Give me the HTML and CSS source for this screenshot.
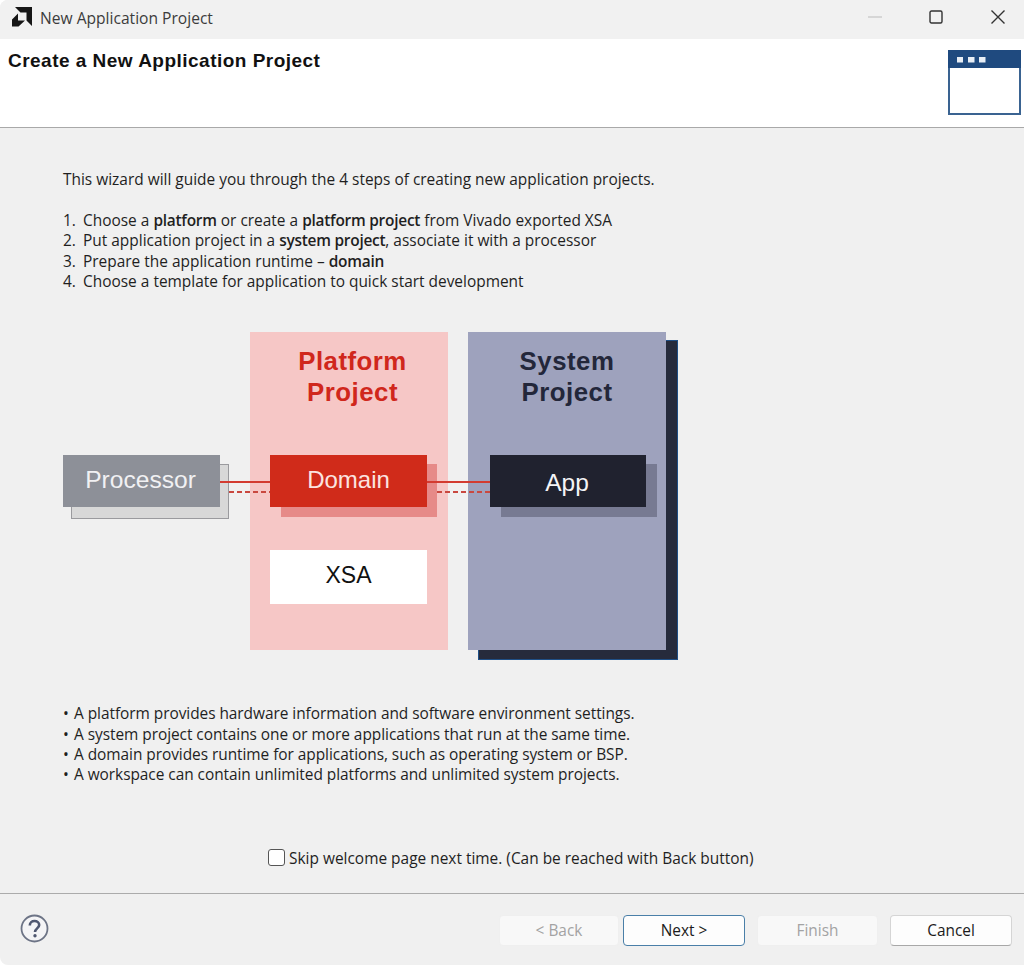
FILE: index.html
```html
<!DOCTYPE html>
<html lang="en">
<head>
<meta charset="utf-8">
<title>New Application Project</title>
<link rel="stylesheet" href="styles.css">
</head>
<body>
<div class="window">
  <header class="titlebar">
    <svg class="app-logo" width="20" height="20" viewBox="0 0 20 20"><path fill="#161616" d="M3 0H20V19L14.5 13.5V5.5H8.5Z"/><path fill="#161616" d="M0 12.5L6 6.5V13.5H13L6.5 19.5H0Z"/></svg>
    <span class="title-text">New Application Project</span>
    <div class="win-controls">
      <svg width="14" height="14" viewBox="0 0 14 14" class="win-min"><path d="M0 7H14" stroke="#c8c8c8" stroke-width="1.3"/></svg>
      <svg width="14" height="14" viewBox="0 0 14 14" class="win-max"><rect x="1" y="1" width="12" height="12" rx="1.5" fill="none" stroke="#333" stroke-width="1.4"/></svg>
      <svg width="14" height="14" viewBox="0 0 14 14" class="win-close"><path d="M0.5 0.5L13.5 13.5M13.5 0.5L0.5 13.5" stroke="#333" stroke-width="1.4"/></svg>
    </div>
  </header>

  <section class="banner">
    <h1 class="banner-title">Create a New Application Project</h1>
    <svg class="banner-icon" width="73" height="65" viewBox="0 0 73 65">
      <rect x="1" y="1" width="71" height="63" fill="#fff" stroke="#3a6391" stroke-width="2"/>
      <rect x="0" y="0" width="73" height="18" fill="#1f4a7f"/>
      <rect x="9" y="7" width="6" height="5.5" fill="#e8eef5"/>
      <rect x="20" y="7" width="6.5" height="5.5" fill="#e8eef5"/>
      <rect x="31" y="7" width="6.5" height="5.5" fill="#e8eef5"/>
    </svg>
  </section>

  <main class="content">
    <p class="intro">This wizard will guide you through the 4 steps of creating new application projects.</p>
    <ol class="steps">
      <li>Choose a <b>platform</b> or create a <b>platform project</b> from Vivado exported XSA</li>
      <li>Put application project in a <b>system project</b>, associate it with a processor</li>
      <li>Prepare the application runtime – <b>domain</b></li>
      <li>Choose a template for application to quick start development</li>
    </ol>

    <div class="diagram">
      <div class="panel panel-platform"><span>Platform<br>Project</span></div>
      <div class="sys-shadow"></div>
      <div class="panel panel-system"><span>System<br>Project</span></div>

      <div class="shadow proc-shadow"></div>
      <div class="shadow dom-shadow"></div>
      <div class="shadow app-shadow"></div>

      <div class="wire wire-a"></div>
      <div class="wire wire-b"></div>
      <div class="dash dash-a"></div>
      <div class="dash dash-b"></div>

      <div class="box box-proc">Processor</div>
      <div class="box box-dom">Domain</div>
      <div class="box box-app">App</div>
      <div class="box box-xsa">XSA</div>
    </div>

    <ul class="notes">
      <li>A platform provides hardware information and software environment settings.</li>
      <li>A system project contains one or more applications that run at the same time.</li>
      <li>A domain provides runtime for applications, such as operating system or BSP.</li>
      <li>A workspace can contain unlimited platforms and unlimited system projects.</li>
    </ul>

    <label class="skip"><span class="check"></span>Skip welcome page next time. (Can be reached with Back button)</label>
  </main>

  <footer class="footer">
    <svg class="help" width="29" height="29" viewBox="0 0 29 29">
      <circle cx="14.5" cy="14.5" r="13" fill="#f4f4f6" stroke="#6d7486" stroke-width="1.8"/>
      <path d="M9.8 11.5C9.8 8.6 12 7 14.5 7C17.2 7 19.2 8.7 19.2 11C19.2 14.2 15 14.6 15 18" fill="none" stroke="#4f5770" stroke-width="2.6"/>
      <circle cx="15" cy="21.8" r="1.7" fill="#4f5770"/>
    </svg>
    <div class="buttons">
      <button class="btn btn-back" disabled>&lt; Back</button>
      <button class="btn btn-default">Next &gt;</button>
      <button class="btn btn-finish" disabled>Finish</button>
      <button class="btn btn-cancel">Cancel</button>
    </div>
  </footer>
</div>
</body>
</html>
```
FILE: styles.css
```css
* { box-sizing: border-box; }
html, body { margin: 0; padding: 0; }
body {
  width: 1024px;
  height: 965px;
  overflow: hidden;
  background: #fff;
  font-family: "Open Sans", "Noto Sans", sans-serif;
  color: #1f1f1f;
}
.window { display: flex; flex-direction: column; height: 965px; background: #f0f0f0; border-radius: 8px 0 0 8px; overflow: hidden; }

.titlebar {
  height: 39px;
  display: flex;
  align-items: center;
  padding-left: 12px;
  background: #f1f1f1;
  flex: none;
}
.app-logo { flex: none; margin-right: 8px; margin-top: -5px; }
.title-text { font-size: 15.6px; color: #3c3c3c; margin-top: -4px; }
.win-controls { margin-left: auto; display: flex; align-items: center; gap: 48px; padding-right: 19px; margin-top: -6px; }
.win-max { margin-left: -1px; }

.banner {
  height: 89px;
  flex: none;
  background: #fff;
  border-bottom: 1px solid #a9a9a9;
  display: flex;
  justify-content: space-between;
  align-items: flex-start;
  padding: 11px 3px 0 8px;
}
.banner-title { margin: 0; font: bold 19px/22px "Liberation Sans", Arial, sans-serif; color: #111; letter-spacing: 0.48px; }
.banner-icon { flex: none; }

.content {
  height: 765px;
  flex: none;
  padding: 41px 0 0 63px;
  display: flex;
  flex-direction: column;
  align-items: flex-start;
  font-size: 15.45px;
  line-height: 20.3px;
}
.intro { margin: 0; }
.steps { margin: 20.7px 0 0; padding: 0; list-style: none; counter-reset: step; }
.steps li { counter-increment: step; padding-left: 20px; position: relative; }
.steps li::before { content: counter(step) "."; position: absolute; left: 0; }
.steps b { font-weight: 600; letter-spacing: -0.25px; }

.diagram { position: relative; width: 680px; height: 330px; margin-top: 41.3px; margin-left: -63px; flex: none; font-family: "Liberation Sans", Arial, sans-serif; }
.panel { position: absolute; top: 0; text-align: center; font-weight: bold; font-size: 25.8px; line-height: 31px; padding-top: 14px; letter-spacing: 0.5px; }
.panel-platform { left: 250px; width: 198px; height: 318px; background: #f6c7c6; color: #d0271c; padding-left: 7px; }
.panel-system { left: 468px; width: 198px; height: 318px; background: #9ea2bd; color: #23273a; }
.sys-shadow { position: absolute; left: 478px; top: 8px; width: 200px; height: 320px; background: #262b3c; border: 1px solid #1f4f86; }
.shadow { position: absolute; }
.proc-shadow { left: 71px; top: 132px; width: 158px; height: 55px; background: #d8d8d8; border: 1px solid #9a9a9e; }
.dom-shadow { left: 281px; top: 132px; width: 156px; height: 53px; background: #e68a88; }
.app-shadow { left: 501px; top: 132px; width: 156px; height: 53px; background: #777a92; }
.wire { position: absolute; top: 149px; height: 1.5px; background: #d33b30; }
.wire-a { left: 220px; width: 50px; }
.wire-b { left: 427px; width: 64px; }
.dash { position: absolute; top: 159px; height: 1.5px; background: repeating-linear-gradient(90deg, #c9483f 0 5px, transparent 5px 8px); }
.dash-a { left: 229px; width: 41px; }
.dash-b { left: 437px; width: 54px; }
.box { position: absolute; display: flex; align-items: center; justify-content: center; font-size: 24px; }
.box-proc { left: 63px; top: 123px; width: 157px; height: 52px; background: #8d9098; color: #f1f1f3; font-size: 24.6px; padding-bottom: 2px; padding-right: 2px; }
.box-dom { left: 270px; top: 123px; width: 157px; height: 52px; background: #d02b1a; color: #fbe4e0; font-size: 24px; padding-bottom: 2px; }
.box-app { left: 490px; top: 123px; width: 156px; height: 52px; background: #20222f; color: #f4f4f6; font-size: 24.5px; padding-top: 3px; padding-right: 2px; }
.box-xsa { left: 270px; top: 218px; width: 157px; height: 54px; background: #fff; color: #111; font-size: 23px; padding-bottom: 4px; }

.notes { margin: 41px 0 0; padding: 0; list-style: none; letter-spacing: -0.05px; }
.notes li { padding-left: 11px; position: relative; }
.notes li::before { content: "•"; position: absolute; left: 0; }

.skip { display: flex; align-items: center; margin: 63px 0 0 205px; }
.check { width: 17px; height: 17px; background: #fff; border: 1.5px solid #555; border-radius: 3px; margin-right: 4px; flex: none; }

.footer {
  flex: 1;
  border-top: 1px solid #ababab;
  display: flex;
  align-items: flex-start;
  justify-content: space-between;
  padding: 20px 0 0 20px;
}
.help { flex: none; }
.buttons { display: flex; padding: 1px 12px 0 0; }
.btn {
  width: 122px;
  height: 31px;
  font: 15.4px "Open Sans", "Noto Sans", sans-serif;
  background: #fdfdfd;
  color: #1b1b1b;
  border: 1px solid #d5d5d5;
  border-bottom-color: #a8a8a8;
  border-radius: 4px;
  padding: 0;
}
.btn[disabled] { background: #f8f8f8; color: #a3a3a3; border-color: #efefef; }
.btn-back { width: 120px; margin-right: 4px; }
.btn-default { border: 1.5px solid #4a7fa8; margin-right: 12px; }
.btn-finish { width: 121px; margin-right: 12px; }
```
